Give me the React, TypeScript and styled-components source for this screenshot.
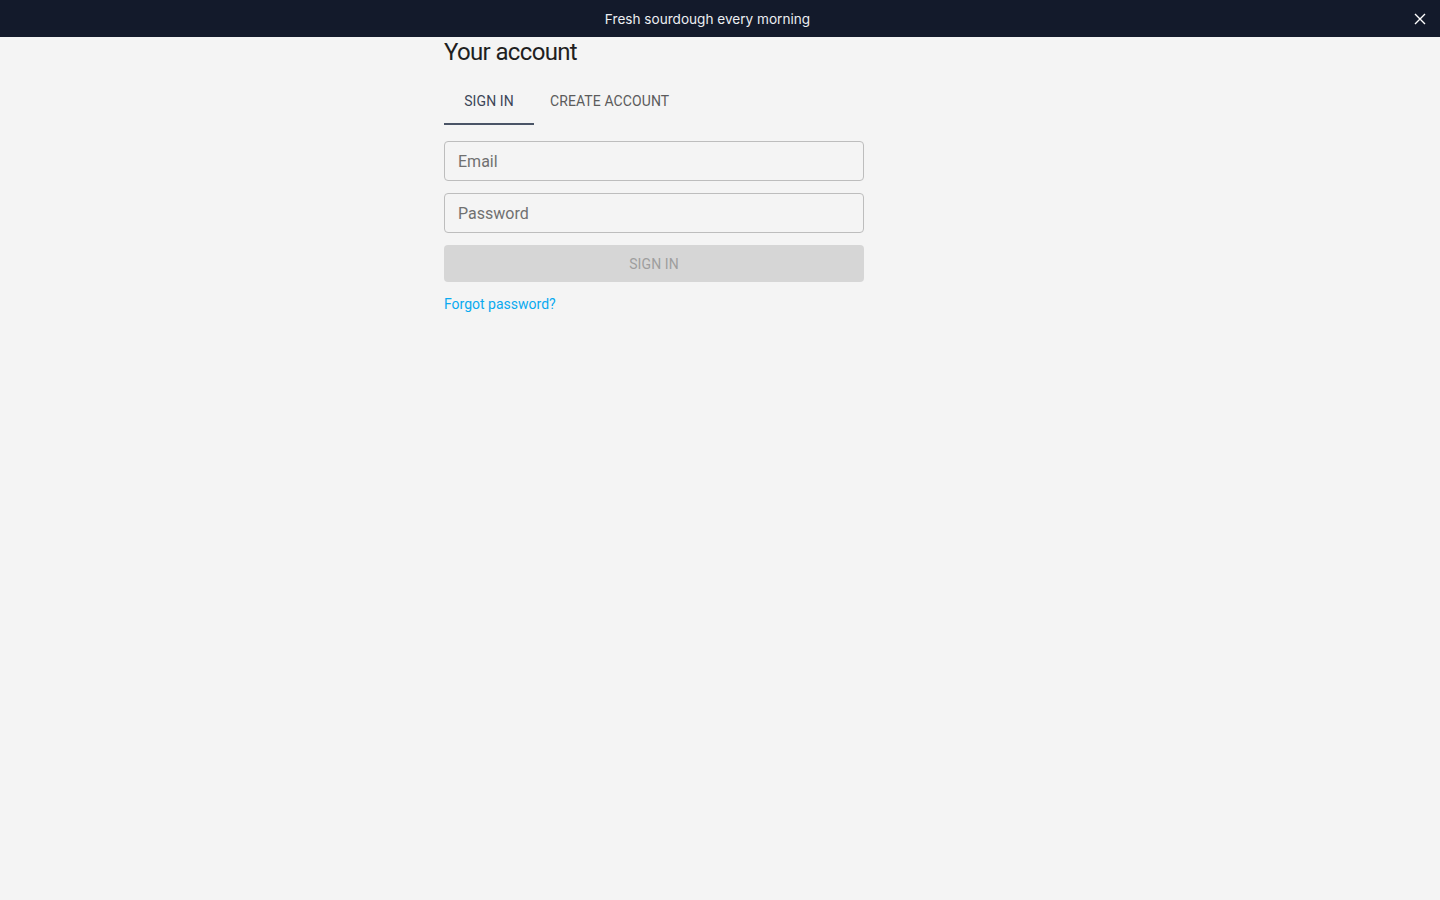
import React, { useState } from 'react'
import styled, { createGlobalStyle } from 'styled-components'

const GlobalStyle = createGlobalStyle`
	html, body {
		margin: 0;
		padding: 0;
		background: #f4f4f4;
		font-family: Roboto, "Liberation Sans", Arial, sans-serif;
	}
	* {
		box-sizing: border-box;
	}
`

const Page = styled.div`
	min-height: 100vh;
	display: flex;
	flex-direction: column;
	background: #f4f4f4;
`

const Banner = styled.div`
	height: 37px;
	background: #131a2b;
	display: flex;
	align-items: center;
	justify-content: center;
	position: relative;
	padding-right: 25px;
`

const BannerText = styled.p`
	margin: 0;
	color: #eceef2;
	font-family: Inter, Roboto, sans-serif;
	font-size: 13.6px;
`

const CloseButton = styled.button`
	position: absolute;
	right: 8px;
	top: 50%;
	transform: translateY(-50%);
	width: 24px;
	height: 24px;
	display: flex;
	align-items: center;
	justify-content: center;
	background: none;
	border: 0;
	padding: 0;
	cursor: pointer;
	color: #ffffff;
`

const Main = styled.main`
	padding-left: 444px;
`

const Panel = styled.section`
	width: 420px;
	display: flex;
	flex-direction: column;
`

const Title = styled.h1`
	margin: 0;
	font-size: 24px;
	line-height: 30px;
	font-weight: 400;
	letter-spacing: -0.65px;
	color: #1f1f1f;
`

const Tabs = styled.div`
	display: flex;
	margin-top: 10px;
	margin-bottom: 16px;
`

const Tab = styled.button<{ $active?: boolean }>`
	height: 48px;
	padding: 2px 16px 0;
	min-width: 90px;
	background: none;
	border: 0;
	border-bottom: 2px solid ${p => (p.$active ? '#4a5466' : 'transparent')};
	font-family: inherit;
	font-size: 14px;
	font-weight: 400;
	text-transform: uppercase;
	letter-spacing: 0.1px;
	color: ${p => (p.$active ? '#3c4658' : '#5b5b5b')};
	cursor: pointer;
`

const Form = styled.form`
	display: flex;
	flex-direction: column;
	gap: 12px;
`

const Input = styled.input`
	height: 40px;
	width: 100%;
	padding: 0 13px;
	border: 1px solid #bdbdbd;
	border-radius: 4px;
	background: transparent;
	font-family: inherit;
	font-size: 16px;
	color: #222;
	outline: none;
	&::placeholder {
		color: #707070;
	}
`

const Submit = styled.button`
	height: 37px;
	width: 100%;
	border: 0;
	border-radius: 4px;
	background: #d6d6d6;
	color: #9e9e9e;
	font-family: inherit;
	font-size: 14px;
	text-transform: uppercase;
	letter-spacing: 0.1px;
`

const Forgot = styled.a`
	margin-top: 14px;
	font-size: 14px;
	color: #0aaaf0;
	text-decoration: none;
	align-self: flex-start;
`

export default function App() {
	const [tab, setTab] = useState<'signin' | 'create'>('signin')
	return (
		<Page>
			<GlobalStyle />
			<Banner>
				<BannerText>Fresh sourdough every morning</BannerText>
				<CloseButton aria-label="Close">
					<svg width="12" height="12" viewBox="0 0 12 12" fill="none" stroke="currentColor" strokeWidth="1.4">
						<path d="M1 1 L11 11 M11 1 L1 11" />
					</svg>
				</CloseButton>
			</Banner>
			<Main>
				<Panel>
					<Title>Your account</Title>
					<Tabs>
						<Tab $active={tab === 'signin'} onClick={() => setTab('signin')}>Sign in</Tab>
						<Tab $active={tab === 'create'} onClick={() => setTab('create')}>Create account</Tab>
					</Tabs>
					<Form onSubmit={e => e.preventDefault()}>
						<Input type="email" placeholder="Email" />
						<Input type="password" placeholder="Password" />
						<Submit type="submit" disabled>Sign in</Submit>
					</Form>
					<Forgot href="#">Forgot password?</Forgot>
				</Panel>
			</Main>
		</Page>
	)
}
